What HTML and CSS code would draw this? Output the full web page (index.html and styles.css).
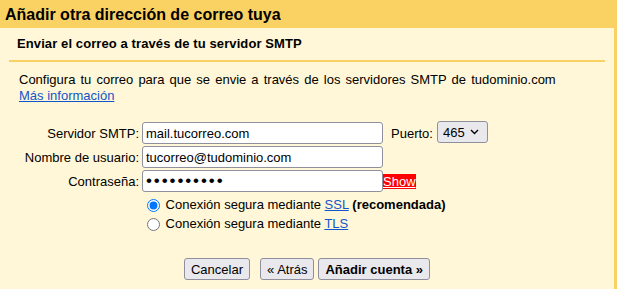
FILE: index.html
```html
<!DOCTYPE html>
<html lang="es">
<head>
    <meta charset="UTF-8">
    <title>Añadir otra dirección de correo tuya</title>
    <link rel="stylesheet" href="styles.css">
</head>
<body>
    <h1 class="title">Añadir otra dirección de correo tuya</h1>
    <div class="panel">
        <h2 class="subtitle">Enviar el correo a través de tu servidor SMTP</h2>
        <p class="intro">
            <span class="intro-line">Configura tu correo para que se envie a través de los servidores SMTP de tudominio.com</span><br>
            <a href="#" class="link">Más información</a>
        </p>

        <form class="smtp-form">
            <div class="row">
                <label class="label" for="server">Servidor SMTP:</label>
                <input class="field" type="text" id="server" value="mail.tucorreo.com">
                <label class="port-label" for="port">Puerto:</label>
                <span class="port-wrap">
                    <select class="port" id="port">
                        <option>465</option>
                        <option>587</option>
                        <option>25</option>
                    </select>
                    <svg class="chevron" width="9" height="6" viewBox="0 0 9 6">
                        <path d="M1 1l3.5 3.5L8 1" fill="none" stroke="#000" stroke-width="1.4"/>
                    </svg>
                </span>
            </div>
            <div class="row">
                <label class="label" for="user">Nombre de usuario:</label>
                <input class="field" type="text" id="user" value="tucorreo@tudominio.com">
            </div>
            <div class="row">
                <label class="label" for="pass">Contraseña:</label>
                <input class="field password" type="password" id="pass" value="abcdefghij">
                <a href="#" class="show">Show</a>
            </div>

            <div class="options">
                <label class="option">
                    <input type="radio" name="secure" checked>
                    Conexión segura mediante <a href="#" class="link">SSL</a> <b>(recomendada)</b>
                </label>
                <label class="option">
                    <input type="radio" name="secure">
                    Conexión segura mediante <a href="#" class="link">TLS</a>
                </label>
            </div>

            <div class="actions">
                <button type="button" class="btn cancel">Cancelar</button>
                <button type="button" class="btn">« Atrás</button>
                <button type="submit" class="btn primary">Añadir cuenta »</button>
            </div>
        </form>
    </div>
</body>
</html>
```

FILE: styles.css
```css
body {
    margin: 0;
    background-color: #fad163;
    font-family: Arial, "Liberation Sans", sans-serif;
    font-size: 13px;
    color: #000;
    height: 289px;
    display: flex;
    flex-direction: column;
    overflow: hidden;
}
.title {
    margin: 0;
    height: 28px;
    padding: 0 5px;
    font-size: 16px;
    line-height: 30px;
    font-weight: bold;
    box-sizing: border-box;
}
.panel {
    flex: 1;
    background-color: #fff7d7;
    margin-right: 3px;
}
.subtitle {
    margin: 0 9px;
    padding: 8px 8px;
    font-size: 13px;
    line-height: 16px;
    font-weight: bold;
    letter-spacing: 0.1px;
    border-bottom: 2px solid #fad163;
}
.intro {
    margin: 10px 0 0 19px;
    line-height: 16px;
}
.intro-line {
    word-spacing: 1.5px;
}
.link {
    color: #1155cc;
}
.smtp-form {
    margin-top: 17px;
}
.row {
    display: flex;
    align-items: center;
    height: 24px;
}
.label {
    width: 139px;
    margin-right: 3px;
    text-align: right;
}
.field {
    width: 241px;
    height: 22px;
    box-sizing: border-box;
    margin: 0;
    padding: 1px 3px;
    border: 1px solid #8f8f9d;
    border-radius: 3px;
    background-color: #fff;
    font-family: Arial, "Liberation Sans", sans-serif;
    font-size: 13px;
}
.password {
    font-size: 17px;
    letter-spacing: 1.9px;
}
.port-label {
    margin-left: 8px;
    margin-right: 4px;
}
.port-wrap {
    position: relative;
    display: inline-block;
    margin-bottom: 2px;
}
.port {
    display: block;
    width: 51px;
    height: 22px;
    margin: 0;
    padding: 0 0 0 5px;
    appearance: none;
    background-color: #e9e9ed;
    border: 1px solid #8f8f9d;
    border-radius: 3px;
    color: #000;
    font-family: Arial, "Liberation Sans", sans-serif;
    font-size: 13px;
}
.chevron {
    position: absolute;
    right: 9px;
    top: 8px;
    pointer-events: none;
}
.show {
    background-color: #ff0000;
    color: #fff;
    line-height: 15px;
    margin-top: 1px;
}
.options {
    margin: 3px 0 0 142px;
}
.option {
    display: block;
    height: 19px;
    line-height: 18px;
}
.option input {
    margin: 3px 2px 0 5px;
    vertical-align: top;
    width: 13px;
    height: 13px;
}
.actions {
    display: flex;
    justify-content: center;
    gap: 4px;
    margin-top: 24px;
}
.btn {
    height: 22px;
    margin: 0;
    padding: 1px 6px;
    background-color: #e9e9ed;
    border: 1px solid #8f8f9d;
    border-radius: 3px;
    color: #000;
    font-family: Arial, "Liberation Sans", sans-serif;
    font-size: 13px;
}
.cancel {
    margin-right: 6px;
}
.primary {
    font-weight: bold;
}
```
